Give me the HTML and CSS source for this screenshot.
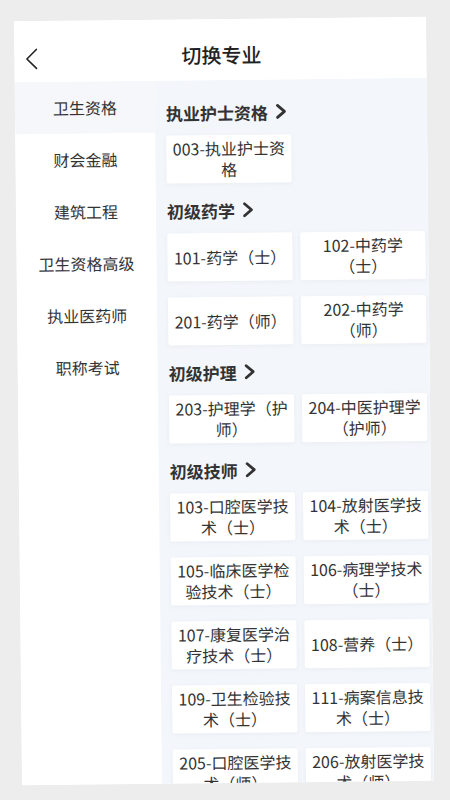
FILE: index.html
```html
<!DOCTYPE html>
<html lang="zh-CN">
<head>
<meta charset="utf-8">
<title>切换专业</title>
<link rel="stylesheet" href="styles.css">
</head>
<body>
<div class="screen">
  <header class="header">
    <span class="back">
      <svg width="14" height="22" viewBox="0 0 14 22"><path d="M12 1.5 L2.5 11 L12 20.5" fill="none" stroke="#222" stroke-width="1.6" stroke-linecap="round" stroke-linejoin="round"/></svg>
    </span>
    <h1 class="title">切换专业</h1>
  </header>
  <div class="body">
    <nav class="side">
      <div class="side-item active">卫生资格</div>
      <div class="side-item">财会金融</div>
      <div class="side-item">建筑工程</div>
      <div class="side-item">卫生资格高级</div>
      <div class="side-item">执业医药师</div>
      <div class="side-item">职称考试</div>
    </nav>
    <main class="panel">
      <section class="group">
        <div class="group-title">执业护士资格<svg class="chev" width="12" height="16" viewBox="0 0 12 16"><path d="M2.5 2 L9.5 8 L2.5 14" fill="none" stroke="#333" stroke-width="2.8" stroke-linecap="round" stroke-linejoin="round"/></svg></div>
        <div class="grid">
          <div class="card">003-执业护士资格</div>
        </div>
      </section>
      <section class="group">
        <div class="group-title">初级药学<svg class="chev" width="12" height="16" viewBox="0 0 12 16"><path d="M2.5 2 L9.5 8 L2.5 14" fill="none" stroke="#333" stroke-width="2.8" stroke-linecap="round" stroke-linejoin="round"/></svg></div>
        <div class="grid">
          <div class="card">101-药学（士）</div>
          <div class="card">102-中药学（士）</div>
          <div class="card">201-药学（师）</div>
          <div class="card">202-中药学（师）</div>
        </div>
      </section>
      <section class="group">
        <div class="group-title">初级护理<svg class="chev" width="12" height="16" viewBox="0 0 12 16"><path d="M2.5 2 L9.5 8 L2.5 14" fill="none" stroke="#333" stroke-width="2.8" stroke-linecap="round" stroke-linejoin="round"/></svg></div>
        <div class="grid">
          <div class="card">203-护理学（护师）</div>
          <div class="card">204-中医护理学（护师）</div>
        </div>
      </section>
      <section class="group">
        <div class="group-title">初级技师<svg class="chev" width="12" height="16" viewBox="0 0 12 16"><path d="M2.5 2 L9.5 8 L2.5 14" fill="none" stroke="#333" stroke-width="2.8" stroke-linecap="round" stroke-linejoin="round"/></svg></div>
        <div class="grid">
          <div class="card">103-口腔医学技术（士）</div>
          <div class="card">104-放射医学技术（士）</div>
          <div class="card">105-临床医学检验技术（士）</div>
          <div class="card">106-病理学技术（士）</div>
          <div class="card">107-康复医学治疗技术（士）</div>
          <div class="card">108-营养（士）</div>
          <div class="card">109-卫生检验技术（士）</div>
          <div class="card">111-病案信息技术（士）</div>
          <div class="card">205-口腔医学技术（师）</div>
          <div class="card">206-放射医学技术（师）</div>
        </div>
      </section>
    </main>
  </div>
</div>
</body>
</html>
```
FILE: styles.css
```css
html, body {
  margin: 0;
  padding: 0;
}
body {
  width: 450px;
  height: 800px;
  overflow: hidden;
  background: #ededed;
  font-family: "Noto Sans CJK SC", "Noto Sans", sans-serif;
  color: #333;
}
.screen {
  width: 412px;
  height: 764px;
  margin: 19px 0 0 18px;
  background: #fff;
  overflow: hidden;
  display: flex;
  flex-direction: column;
  transform: rotate(-0.6deg);
}
.header {
  height: 61px;
  flex: none;
  box-sizing: border-box;
  padding-top: 9px;
  display: flex;
  align-items: center;
  justify-content: center;
  position: relative;
  background: #fff;
}
.back {
  position: absolute;
  left: 10px;
  top: 27px;
  display: flex;
}
.title {
  margin: 0;
  font-size: 20px;
  font-weight: 500;
  color: #222;
  padding-left: 2px;
}
.body {
  flex: 1;
  display: flex;
  min-height: 0;
}
.side {
  width: 140px;
  flex: none;
  background: #fff;
}
.side-item {
  height: 52px;
  display: flex;
  align-items: center;
  justify-content: center;
  font-size: 16px;
  color: #333;
}
.side-item.active {
  background: #f5f7fb;
}
.panel {
  flex: 1;
  background: #f3f6fa;
  padding: 21px 4px 0 11px;
  overflow: hidden;
}
.group {
  margin-bottom: 16px;
}
.group-title {
  height: 22px;
  display: flex;
  align-items: center;
  gap: 7px;
  font-size: 17px;
  font-weight: 700;
  color: #333;
  margin-bottom: 12px;
}
.chev {
  display: block;
}
.grid {
  display: grid;
  grid-template-columns: 125px 125px;
  column-gap: 8px;
  row-gap: 16px;
}
.card {
  height: 48px;
  box-sizing: border-box;
  padding: 0 4px;
  background: #fff;
  border-radius: 2px;
  box-shadow: 0 1px 4px rgba(120, 140, 170, 0.08);
  display: flex;
  align-items: center;
  justify-content: center;
  text-align: center;
  font-size: 16px;
  line-height: 21px;
  color: #333;
}
```
